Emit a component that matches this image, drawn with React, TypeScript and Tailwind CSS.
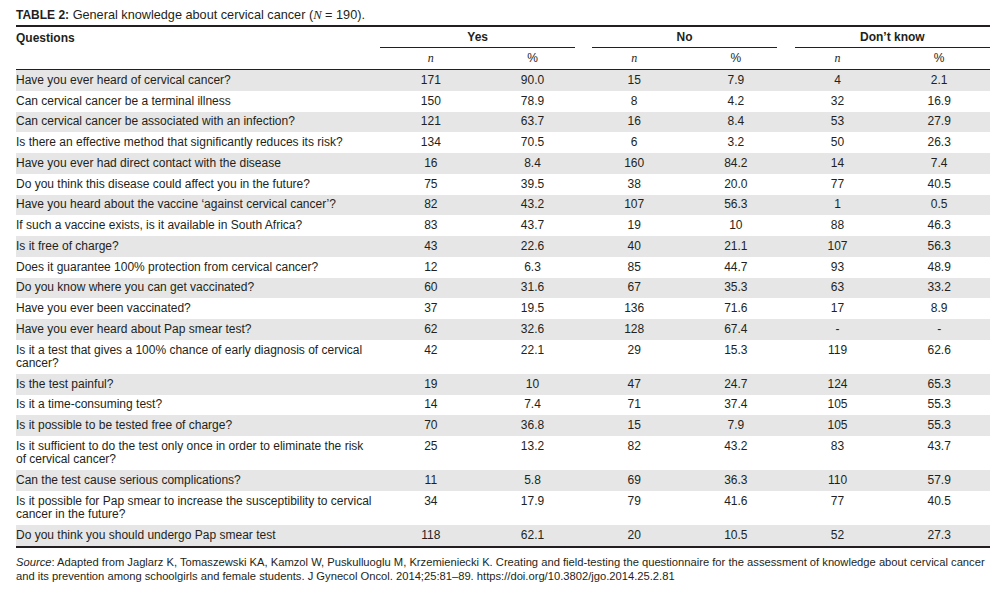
import React from "react";

type Row = { q: string[]; v: string[] };

const rows: Row[] = [
  { q: ["Have you ever heard of cervical cancer?"], v: ["171", "90.0", "15", "7.9", "4", "2.1"] },
  { q: ["Can cervical cancer be a terminal illness"], v: ["150", "78.9", "8", "4.2", "32", "16.9"] },
  { q: ["Can cervical cancer be associated with an infection?"], v: ["121", "63.7", "16", "8.4", "53", "27.9"] },
  { q: ["Is there an effective method that significantly reduces its risk?"], v: ["134", "70.5", "6", "3.2", "50", "26.3"] },
  { q: ["Have you ever had direct contact with the disease"], v: ["16", "8.4", "160", "84.2", "14", "7.4"] },
  { q: ["Do you think this disease could affect you in the future?"], v: ["75", "39.5", "38", "20.0", "77", "40.5"] },
  { q: ["Have you heard about the vaccine \u2018against cervical cancer\u2019?"], v: ["82", "43.2", "107", "56.3", "1", "0.5"] },
  { q: ["If such a vaccine exists, is it available in South Africa?"], v: ["83", "43.7", "19", "10", "88", "46.3"] },
  { q: ["Is it free of charge?"], v: ["43", "22.6", "40", "21.1", "107", "56.3"] },
  { q: ["Does it guarantee 100% protection from cervical cancer?"], v: ["12", "6.3", "85", "44.7", "93", "48.9"] },
  { q: ["Do you know where you can get vaccinated?"], v: ["60", "31.6", "67", "35.3", "63", "33.2"] },
  { q: ["Have you ever been vaccinated?"], v: ["37", "19.5", "136", "71.6", "17", "8.9"] },
  { q: ["Have you ever heard about Pap smear test?"], v: ["62", "32.6", "128", "67.4", "-", "-"] },
  { q: ["Is it a test that gives a 100% chance of early diagnosis of cervical", "cancer?"], v: ["42", "22.1", "29", "15.3", "119", "62.6"] },
  { q: ["Is the test painful?"], v: ["19", "10", "47", "24.7", "124", "65.3"] },
  { q: ["Is it a time-consuming test?"], v: ["14", "7.4", "71", "37.4", "105", "55.3"] },
  { q: ["Is it possible to be tested free of charge?"], v: ["70", "36.8", "15", "7.9", "105", "55.3"] },
  { q: ["Is it sufficient to do the test only once in order to eliminate the risk", "of cervical cancer?"], v: ["25", "13.2", "82", "43.2", "83", "43.7"] },
  { q: ["Can the test cause serious complications?"], v: ["11", "5.8", "69", "36.3", "110", "57.9"] },
  { q: ["Is it possible for Pap smear to increase the susceptibility to cervical", "cancer in the future?"], v: ["34", "17.9", "79", "41.6", "77", "40.5"] },
  { q: ["Do you think you should undergo Pap smear test"], v: ["118", "62.1", "20", "10.5", "52", "27.3"] },
];

function Italic({ children }: { children: React.ReactNode }) {
  return <span className="font-['Liberation_Serif'] italic">{children}</span>;
}

export default function App() {
  return (
    <div className="w-[996px] h-[589px] bg-white text-[#231f20] font-['Liberation_Sans',sans-serif] text-[12px] overflow-hidden">
      <div className="ml-4 w-[974px]">
        <div className="h-[25px] pt-[8px] leading-[14px] whitespace-nowrap text-[12.7px]">
          <span className="font-bold text-[12px]">TABLE 2:</span> General knowledge about cervical cancer (
          <Italic>N</Italic> = 190).
        </div>
        <div className="border-t-2 border-[#231f20]">
          <div className="flex h-[21px] font-bold">
            <div className="w-[364px] pt-[1px] leading-[20px]">Questions</div>
            <div className="flex-1 h-[21px]">
              <div className="mr-[8px] h-[21px] pt-[1px] border-b border-[#231f20] text-center leading-[19px]">Yes</div>
            </div>
            <div className="flex-1 h-[21px]">
              <div className="ml-[9px] mr-[10px] h-[21px] pt-[1px] border-b border-[#231f20] text-center leading-[19px]">No</div>
            </div>
            <div className="flex-1 h-[21px]">
              <div className="ml-[8px] h-[21px] pt-[1px] border-b border-[#231f20] text-center leading-[19px]">Don&rsquo;t know</div>
            </div>
          </div>
          <div className="flex h-[22px] border-b border-[#231f20]">
            <div className="w-[364px]" />
            {["n", "%", "n", "%", "n", "%"].map((h, i) => (
              <div key={i} className="flex-1 text-center leading-[21px]">
                {h === "n" ? <Italic>n</Italic> : h}
              </div>
            ))}
          </div>
        </div>
        <div>
          {rows.map((r, i) => (
            <div
              key={i}
              className={`flex py-[3.75px] leading-[13.25px] ${i % 2 === 0 ? "bg-[#e6e6e6]" : "bg-white"}`}
            >
              <div className="w-[364px] whitespace-nowrap">
                {r.q.map((l, j) => (
                  <div key={j}>{l}</div>
                ))}
              </div>
              {r.v.map((v, j) => (
                <div key={j} className="flex-1 text-center">
                  {v}
                </div>
              ))}
            </div>
          ))}
        </div>
        <div className="border-t-2 border-[#231f20] pt-[7px] text-[11.2px] leading-[14px] whitespace-nowrap">
          <div>
            <span className="italic">Source</span>: Adapted from Jaglarz K, Tomaszewski KA, Kamzol W, Puskulluoglu M, Krzemieniecki K. Creating and field-testing the questionnaire for the assessment of knowledge about cervical cancer
          </div>
          <div>
            and its prevention among schoolgirls and female students. J Gynecol Oncol. 2014;25:81&ndash;89. https://doi.org/10.3802/jgo.2014.25.2.81
          </div>
        </div>
      </div>
    </div>
  );
}
